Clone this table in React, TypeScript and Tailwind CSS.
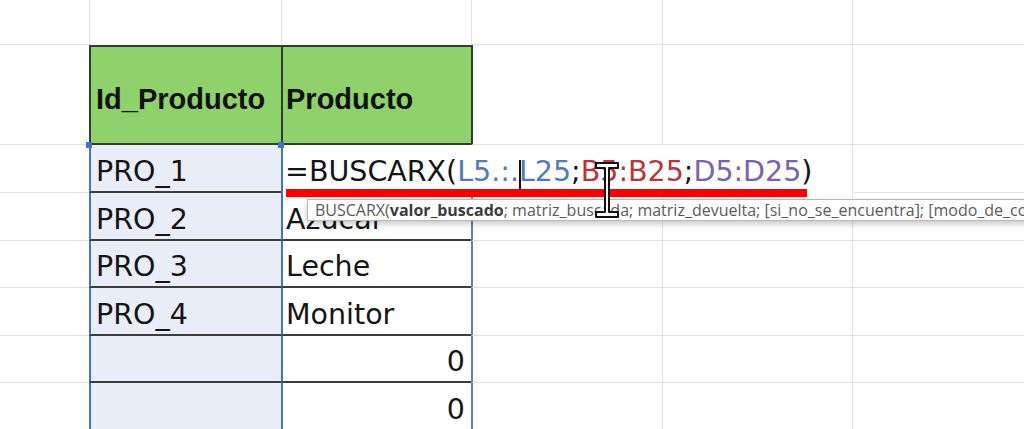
const rows = [
  { id: "PRO_2", name: "Azucar", h: "h-[48px]", num: false },
  { id: "PRO_3", name: "Leche", h: "h-[47px]", num: false },
  { id: "PRO_4", name: "Monitor", h: "h-[48px]", num: false },
  { id: "", name: "0", h: "h-[47px]", num: true },
  { id: "", name: "0", h: "h-[48px]", num: true },
];

function IBeam() {
  return (
    <svg width="26" height="58" viewBox="0 0 26 58" className="absolute left-[594px] top-[161px] z-30">
      <path
        d="M2 2 H24 V7 H15 V51 H24 V56 H2 V51 H11 V7 H2 Z"
        fill="#ffffff"
        stroke="#111111"
        strokeWidth="2"
        strokeLinejoin="round"
      />
    </svg>
  );
}

export default function App() {
  return (
    <div className="relative w-[1024px] h-[429px] overflow-hidden bg-white text-[28.5px] text-[#151515] [font-family:'DejaVu_Sans',sans-serif]">
      {/* row above the table */}
      <div className="flex h-[45px]">
        <div className="w-[89px] border-b border-[#e1e1e1]" />
        <div className="w-[192px] border-l border-[#e1e1e1]" />
        <div className="w-[190px] border-l border-[#e1e1e1]" />
        <div className="w-[191px] border-l border-b border-[#e1e1e1]" />
        <div className="w-[190px] border-l border-b border-[#e1e1e1]" />
        <div className="flex-1 border-l border-b border-[#e1e1e1]" />
      </div>

      {/* header */}
      <div className="flex h-[100px] [font-family:'Liberation_Sans',sans-serif] font-bold text-[29px] leading-[33px] text-[#111]">
        <div className="w-[89px] border-b border-[#e1e1e1]" />
        <div className="w-[192px] flex items-center pl-[5px] pt-[9px] bg-[#8fd26b] border-l-2 border-t-2 border-b-2 border-[#2f3d33]">
          Id_Producto
        </div>
        <div className="w-[190px] flex items-center pl-[3px] pt-[9px] bg-[#8fd26b] border-l-2 border-t-2 border-b-2 border-[#2f3d33]">
          Producto
        </div>
        <div className="w-[191px] border-l-2 border-l-[#2f3d33] border-b border-b-[#e1e1e1]" />
        <div className="w-[190px] border-l border-b border-[#e1e1e1]" />
        <div className="flex-1 border-l border-b border-[#e1e1e1]" />
      </div>

      {/* row in edit mode */}
      <div className="flex h-[48px]">
        <div className="w-[89px] border-b border-[#e1e1e1]" />
        <div className="w-[192px] flex items-center pl-[5px] pt-[8px] bg-[#e9edf8] border-l-2 border-l-[#4472c4] border-b-2 border-b-[#3d3d3d]">
          PRO_1
        </div>
        <div className="w-[571px] flex items-center pl-[2px] pt-[6px] bg-white border-l-2 border-l-[#4472c4] whitespace-nowrap">
          <span>=BUSCARX(</span>
          <span className="text-[#4f7bc0]">L5.:.L25</span>
          <span>;</span>
          <span className="text-[#b9343c]">B5:B25</span>
          <span>;</span>
          <span className="text-[#7b62b0]">D5:D25</span>
          <span>)</span>
        </div>
        <div className="flex-1 border-l border-b border-[#e1e1e1]" />
      </div>

      {rows.map((r, i) => (
        <div key={i} className={`flex ${r.h}`}>
          <div className="w-[89px] border-b border-[#e1e1e1]" />
          <div className="w-[192px] flex items-center pl-[5px] pt-[8px] bg-[#e9edf8] border-l-2 border-l-[#4472c4] border-b-2 border-b-[#3d3d3d]">
            {r.id}
          </div>
          <div
            className={`w-[190px] flex items-center pt-[8px] bg-white border-l-2 border-l-[#4472c4] border-b-2 border-b-[#3d3d3d] ${
              r.num ? "justify-end pr-[6px]" : "pl-[3px]"
            }`}
          >
            {r.name}
          </div>
          <div className="w-[191px] border-l-2 border-l-[#5f7fc6] border-b border-b-[#e1e1e1]" />
          <div className="w-[190px] border-l border-b border-[#e1e1e1]" />
          <div className="flex-1 border-l border-b border-[#e1e1e1]" />
        </div>
      ))}

      {/* selection handles */}
      <div className="absolute left-[86px] top-[142px] w-[6px] h-[6px] bg-[#4472c4] z-10" />
      <div className="absolute left-[278px] top-[142px] w-[6px] h-[6px] bg-[#4472c4] z-10" />

      {/* text caret */}
      <div className="absolute left-[519px] top-[160px] w-[2px] h-[31px] bg-[#111] z-10" />

      {/* red underline */}
      <div className="absolute left-[286px] top-[189px] w-[521px] h-[8px] bg-[#ff0000] z-10" />

      {/* function tooltip */}
      <div className="absolute left-[307px] top-[199px] h-[22px] pl-[7px] pr-[8px] flex items-center whitespace-nowrap bg-white border border-[#b8b8b8] shadow-[0_3px_6px_rgba(0,0,0,0.22)] text-[16px] leading-[18px] text-[#5a5a5a] [font-family:'Open_Sans',sans-serif] z-20">
        BUSCARX(<b className="font-bold text-[#3c3c3c]">valor_buscado</b>; matriz_buscada; matriz_devuelta; [si_no_se_encuentra]; [modo_de_coincidencia]; [modo_de_búsqueda])
      </div>

      <IBeam />
    </div>
  );
}
